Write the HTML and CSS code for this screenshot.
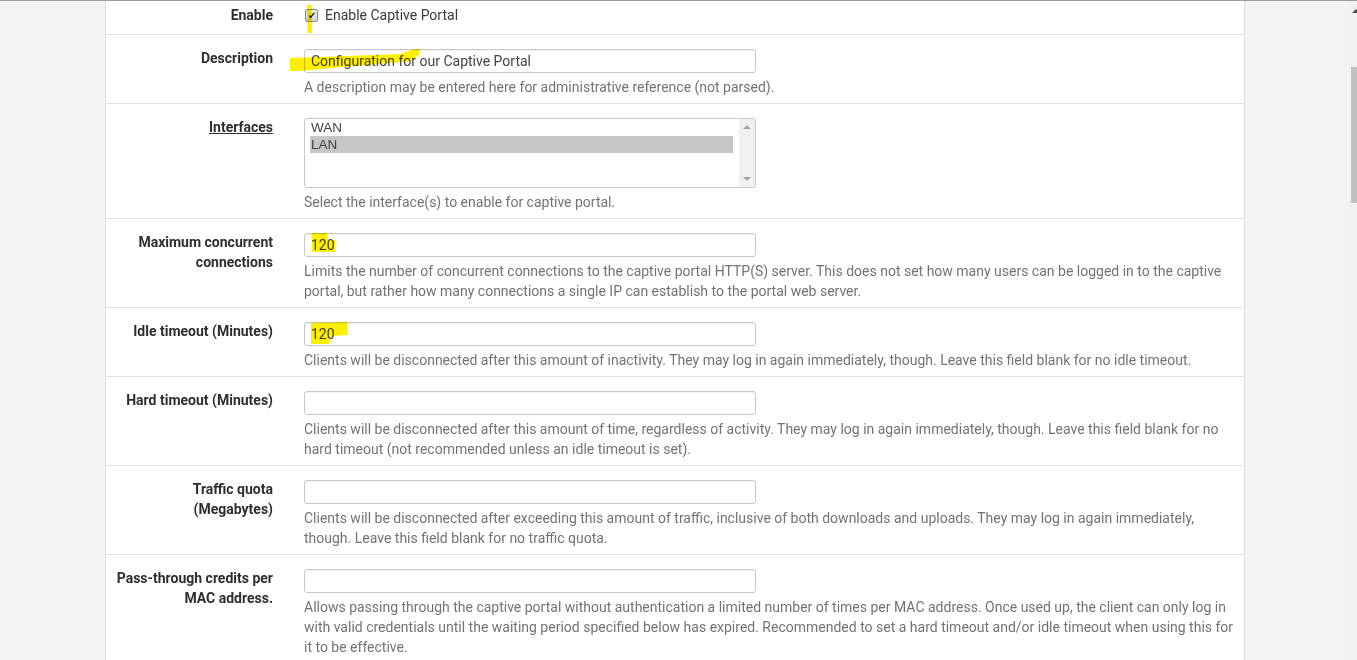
FILE: index.html
```html
<!DOCTYPE html>
<html>
<head>
<meta charset="utf-8">
<link rel="stylesheet" href="styles.css">
</head>
<body>
<div class="topline"></div>
<div class="panel">
  <div class="row row-enable">
    <div class="lbl">Enable</div>
    <div class="cnt">
      <label class="chk"><span class="box">✔</span><span>Enable Captive Portal</span></label>
    </div>
  </div>
  <div class="row">
    <div class="lbl">Description</div>
    <div class="cnt">
      <div class="inp">Configuration for our Captive Portal</div>
      <div class="help">A description may be entered here for administrative reference (not parsed).</div>
    </div>
  </div>
  <div class="row">
    <div class="lbl"><span class="ul">Interfaces</span></div>
    <div class="cnt">
      <div class="sel">
        <div class="opts">
          <div class="opt">WAN</div>
          <div class="opt on">LAN</div>
        </div>
        <div class="sbar"><span class="up"></span><span class="dn"></span></div>
      </div>
      <div class="help">Select the interface(s) to enable for captive portal.</div>
    </div>
  </div>
  <div class="row">
    <div class="lbl">Maximum concurrent connections</div>
    <div class="cnt">
      <div class="inp">120</div>
      <div class="help">Limits the number of concurrent connections to the captive portal HTTP(S) server. This does not set how many users can be logged in to the captive portal, but rather how many connections a single IP can establish to the portal web server.</div>
    </div>
  </div>
  <div class="row">
    <div class="lbl">Idle timeout (Minutes)</div>
    <div class="cnt">
      <div class="inp">120</div>
      <div class="help">Clients will be disconnected after this amount of inactivity. They may log in again immediately, though. Leave this field blank for no idle timeout.</div>
    </div>
  </div>
  <div class="row">
    <div class="lbl">Hard timeout (Minutes)</div>
    <div class="cnt">
      <div class="inp"></div>
      <div class="help">Clients will be disconnected after this amount of time, regardless of activity. They may log in again immediately, though. Leave this field blank for no hard timeout (not recommended unless an idle timeout is set).</div>
    </div>
  </div>
  <div class="row">
    <div class="lbl">Traffic quota (Megabytes)</div>
    <div class="cnt">
      <div class="inp"></div>
      <div class="help">Clients will be disconnected after exceeding this amount of traffic, inclusive of both downloads and uploads. They may log in again immediately, though. Leave this field blank for no traffic quota.</div>
    </div>
  </div>
  <div class="row">
    <div class="lbl">Pass-through credits per MAC address.</div>
    <div class="cnt">
      <div class="inp"></div>
      <div class="help">Allows passing through the captive portal without authentication a limited number of times per MAC address. Once used up, the client can only log in with valid credentials until the waiting period specified below has expired. Recommended to set a hard timeout and/or idle timeout when using this for it to be effective.</div>
    </div>
  </div>
</div>
<div class="pagebar"><span class="pup"></span><span class="thumb"></span></div>
<svg class="marks" width="1357" height="660" viewBox="0 0 1357 660">
  <path d="M307 5 L311.5 5 L312 33 L307.5 33 Z"/>
  <path d="M290 58 L400 54 L414 49 L420 49 L419 55 L410 61 L300 71 L290 71 Z"/>
  <path d="M312 233 L327 233 L328 240 L335 240 L335 252 L312 252 Z"/>
  <path d="M311 323 L347 322 L348 335 L331 336 L329 344 L311 344 Z"/>
</svg>
</body>
</html>
```
FILE: styles.css
```css
html, body {
  margin: 0;
  padding: 0;
  overflow: hidden;
  height: 660px;
}
body {
  background: #f3f3f3;
  font-family: Roboto, "Liberation Sans", sans-serif;
  font-size: 14px;
  line-height: 20px;
  color: #333;
  position: relative;
}
.topline {
  position: absolute;
  left: 0;
  top: 0;
  width: 100%;
  height: 1px;
  background: #9e9e9e;
  z-index: 5;
}
.panel {
  margin-left: 105px;
  width: 1138px;
  background: #fff;
  border-left: 1px solid #dcdcdc;
  border-right: 1px solid #dcdcdc;
  margin-top: -8px;
}
.row {
  display: grid;
  grid-template-columns: 182px 1fr;
  padding: 14px 0 6px;
  border-bottom: 1px solid #e1e1e1;
}
.row-enable {
  padding: 13px 0 9px;
}
.lbl {
  font-weight: bold;
  text-align: right;
  padding-left: 8px;
  padding-right: 15px;
  margin-top: -1px;
  color: #2e2e2e;
}
.row-enable .lbl { margin-top: 0; }
.ul { text-decoration: underline; }
.cnt {
  padding-left: 16px;
  padding-right: 5px;
}
.chk {
  display: flex;
  align-items: center;
  gap: 7px;
  color: #3a3a3a;
}
.box {
  width: 11px;
  height: 11px;
  border: 1px solid #8a8a8a;
  border-radius: 2px;
  background: linear-gradient(#ececec, #d4d4d4);
  font-size: 10px;
  line-height: 11px;
  text-align: center;
  color: #222;
  margin-left: 1px;
}
.inp {
  width: 439px;
  height: 22px;
  border: 1px solid #c8c8c8;
  border-radius: 3px;
  padding: 0 5px 0 6px;
  line-height: 23px;
  color: #444;
  box-shadow: inset 0 1px 1px rgba(0,0,0,0.06);
}
.help {
  margin-top: 4px;
  color: #737373;
}
.sel {
  width: 450px;
  height: 68px;
  border: 1px solid #c8c8c8;
  border-radius: 3px;
  display: flex;
  margin-bottom: 1px;
}
.opts {
  flex: 1;
  padding: 0 6px 0 5px;
  font-family: "Liberation Sans", Arial, sans-serif;
  font-size: 13.5px;
  line-height: 17px;
  color: #444;
}
.opt { padding-left: 1px; }
.opt.on { background: #c6c6c6; }
.sbar {
  width: 16px;
  background: #f0f0f0;
  position: relative;
  border-radius: 0 3px 3px 0;
}
.up, .dn {
  position: absolute;
  left: 4px;
  width: 0;
  height: 0;
  border-left: 4px solid transparent;
  border-right: 4px solid transparent;
}
.up { top: 6px; border-bottom: 4px solid #a3a3a3; }
.dn { bottom: 6px; border-top: 4px solid #a3a3a3; }
.pagebar {
  position: absolute;
  right: 0;
  top: 1px;
  width: 8px;
  height: 659px;
  background: #f1f1f1;
}
.pup {
  position: absolute;
  left: 3px;
  top: 8px;
  width: 0;
  height: 0;
  border-left: 4px solid transparent;
  border-right: 4px solid transparent;
  border-bottom: 4px solid #555;
}
.thumb {
  position: absolute;
  left: 2px;
  top: 66px;
  width: 6px;
  height: 136px;
  background: #c1c1c1;
}
.marks {
  position: absolute;
  left: 0;
  top: 0;
  pointer-events: none;
  mix-blend-mode: multiply;
  fill: #ffef00;
}
```
